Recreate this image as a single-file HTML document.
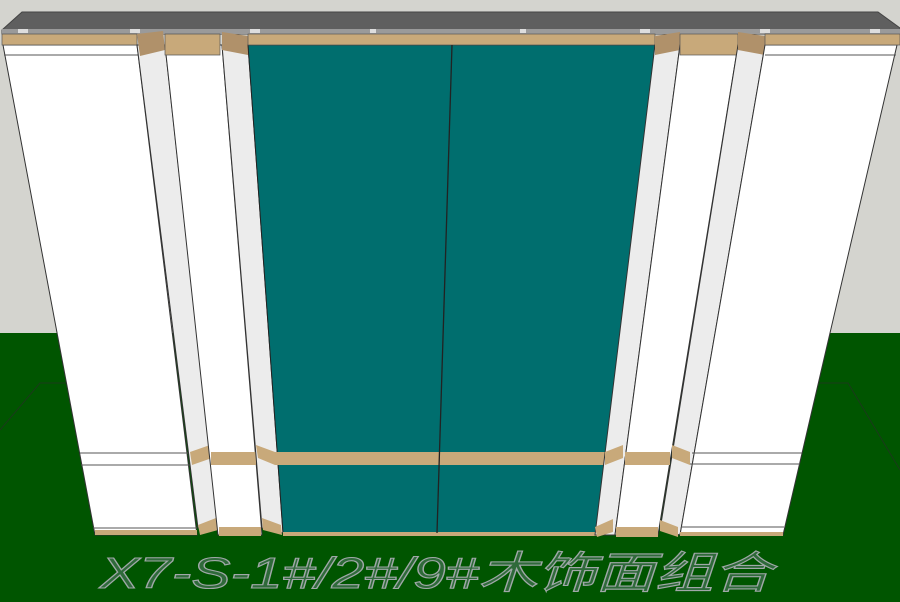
<!DOCTYPE html>
<html><head><meta charset="utf-8"><style>html,body{margin:0;padding:0;background:#d4d4cf;}svg{display:block}</style></head>
<body>
<svg width="900" height="602" viewBox="0 0 900 602" xmlns="http://www.w3.org/2000/svg">
<rect width="900" height="602" fill="#d4d4cf"/>
<polygon points="0,333 900,333 900,602 0,602" fill="#005500"/>
<polyline points="0,430 40,383 848,383 900,470" fill="none" stroke="#1a3a1a" stroke-width="1"/>
<!-- top slab -->
<polygon points="22,12 878,12 900,28 900,34 2,34 2,30" fill="#5f5f5f" stroke="#444" stroke-width="1"/>
<rect x="2" y="29" width="898" height="5" fill="#9a9a9a"/>
<rect x="18" y="29" width="10" height="4" fill="#ddd"/><rect x="130" y="29" width="10" height="4" fill="#ddd"/>
<rect x="250" y="29" width="10" height="4" fill="#ddd"/><rect x="370" y="29" width="6" height="4" fill="#ddd"/>
<rect x="520" y="29" width="6" height="4" fill="#ddd"/><rect x="640" y="29" width="10" height="4" fill="#ddd"/>
<rect x="760" y="29" width="10" height="4" fill="#ddd"/><rect x="870" y="29" width="10" height="4" fill="#ddd"/>
<!-- left panel -->
<polygon points="3,45 137,45 197,535 95,535" fill="#fff" stroke="#333" stroke-width="1"/>
<line x1="4" y1="55" x2="138" y2="55" stroke="#555"/>
<line x1="80" y1="453" x2="190" y2="453" stroke="#555"/>
<line x1="81" y1="465" x2="192" y2="465" stroke="#555"/>
<line x1="93" y1="528" x2="197" y2="528" stroke="#555"/>
<rect x="95" y="530" width="102" height="5" fill="#c8a97a"/>
<polygon points="2,34 137,34 137,45 2,45" fill="#c8a97a" stroke="#555" stroke-width="0.7"/>
<!-- strip1 -->
<polygon points="137,45 165,45 218,528 198,528" fill="#ececec" stroke="#333"/>
<polygon points="137,34 163,31 165,50 140,56" fill="#b0916a"/>
<polygon points="190,452 210,445 212,458 192,465" fill="#c8a97a"/>
<polygon points="198,525 216,518 218,530 200,535" fill="#c8a97a"/>
<!-- panel2 -->
<polygon points="165,45 222,45 262,535 218,535" fill="#fff" stroke="#333"/>
<polygon points="165,34 220,34 220,55 165,55" fill="#c8a97a" stroke="#555" stroke-width="0.7"/>
<rect x="211" y="452" width="45" height="13" fill="#c8a97a"/>
<rect x="219" y="527" width="42" height="9" fill="#c8a97a"/>
<!-- strip2 -->
<polygon points="222,45 248,45 283,533 262,528" fill="#ececec" stroke="#333"/>
<polygon points="222,32 248,36 248,55 222,50" fill="#b0916a"/>
<polygon points="256,445 275,452 275,465 258,458" fill="#c8a97a"/>
<polygon points="262,518 281,525 282,535 263,530" fill="#c8a97a"/>
<!-- teal -->
<polygon points="248,45 655,45 600,533 283,533" fill="#006e6e" stroke="#222"/>
<rect x="248" y="34" width="407" height="11" fill="#c8a97a" stroke="#555" stroke-width="0.7"/>
<rect x="275" y="452" width="335" height="13" fill="#c8a97a"/>
<rect x="283" y="532" width="317" height="4" fill="#c8a97a"/>
<line x1="452" y1="45" x2="437" y2="533" stroke="#222" stroke-width="1.3"/>
<!-- right strip1 -->
<polygon points="655,45 680,45 615,535 595,535" fill="#ececec" stroke="#333"/>
<polygon points="655,36 680,32 680,50 655,55" fill="#b0916a"/>
<polygon points="605,452 623,445 623,458 605,465" fill="#c8a97a"/>
<polygon points="595,527 613,519 613,532 597,537" fill="#c8a97a"/>
<!-- right panel2 -->
<polygon points="680,45 738,45 658,535 615,535" fill="#fff" stroke="#333"/>
<rect x="680" y="34" width="58" height="21" fill="#c8a97a" stroke="#555" stroke-width="0.7"/>
<rect x="625" y="452" width="45" height="13" fill="#c8a97a"/>
<rect x="616" y="527" width="42" height="10" fill="#c8a97a"/>
<!-- right strip2 -->
<polygon points="738,45 765,45 680,535 660,530" fill="#ececec" stroke="#333"/>
<polygon points="738,32 765,36 765,55 738,50" fill="#b0916a"/>
<polygon points="672,445 690,452 690,465 672,458" fill="#c8a97a"/>
<polygon points="660,520 678,527 678,537 660,531" fill="#c8a97a"/>
<!-- right panel -->
<polygon points="765,45 897,45 783,535 680,535" fill="#fff" stroke="#333"/>
<rect x="765" y="34" width="135" height="11" fill="#c8a97a" stroke="#555" stroke-width="0.7"/>
<line x1="765" y1="55" x2="896" y2="55" stroke="#555"/>
<line x1="692" y1="453" x2="802" y2="453" stroke="#555"/>
<line x1="690" y1="464" x2="800" y2="464" stroke="#555"/>
<line x1="681" y1="527" x2="784" y2="527" stroke="#555"/>
<rect x="680" y="532" width="103" height="4" fill="#c8a97a"/>
<text x="100" y="588" font-family="'Liberation Sans','Noto Sans CJK SC',sans-serif" font-size="44" font-style="italic" fill="#2f6a3a" stroke="#a0a8a8" stroke-width="1.1" textLength="672" lengthAdjust="spacingAndGlyphs">X7-S-1#/2#/9#木饰面组合</text>
</svg>
</body></html>
